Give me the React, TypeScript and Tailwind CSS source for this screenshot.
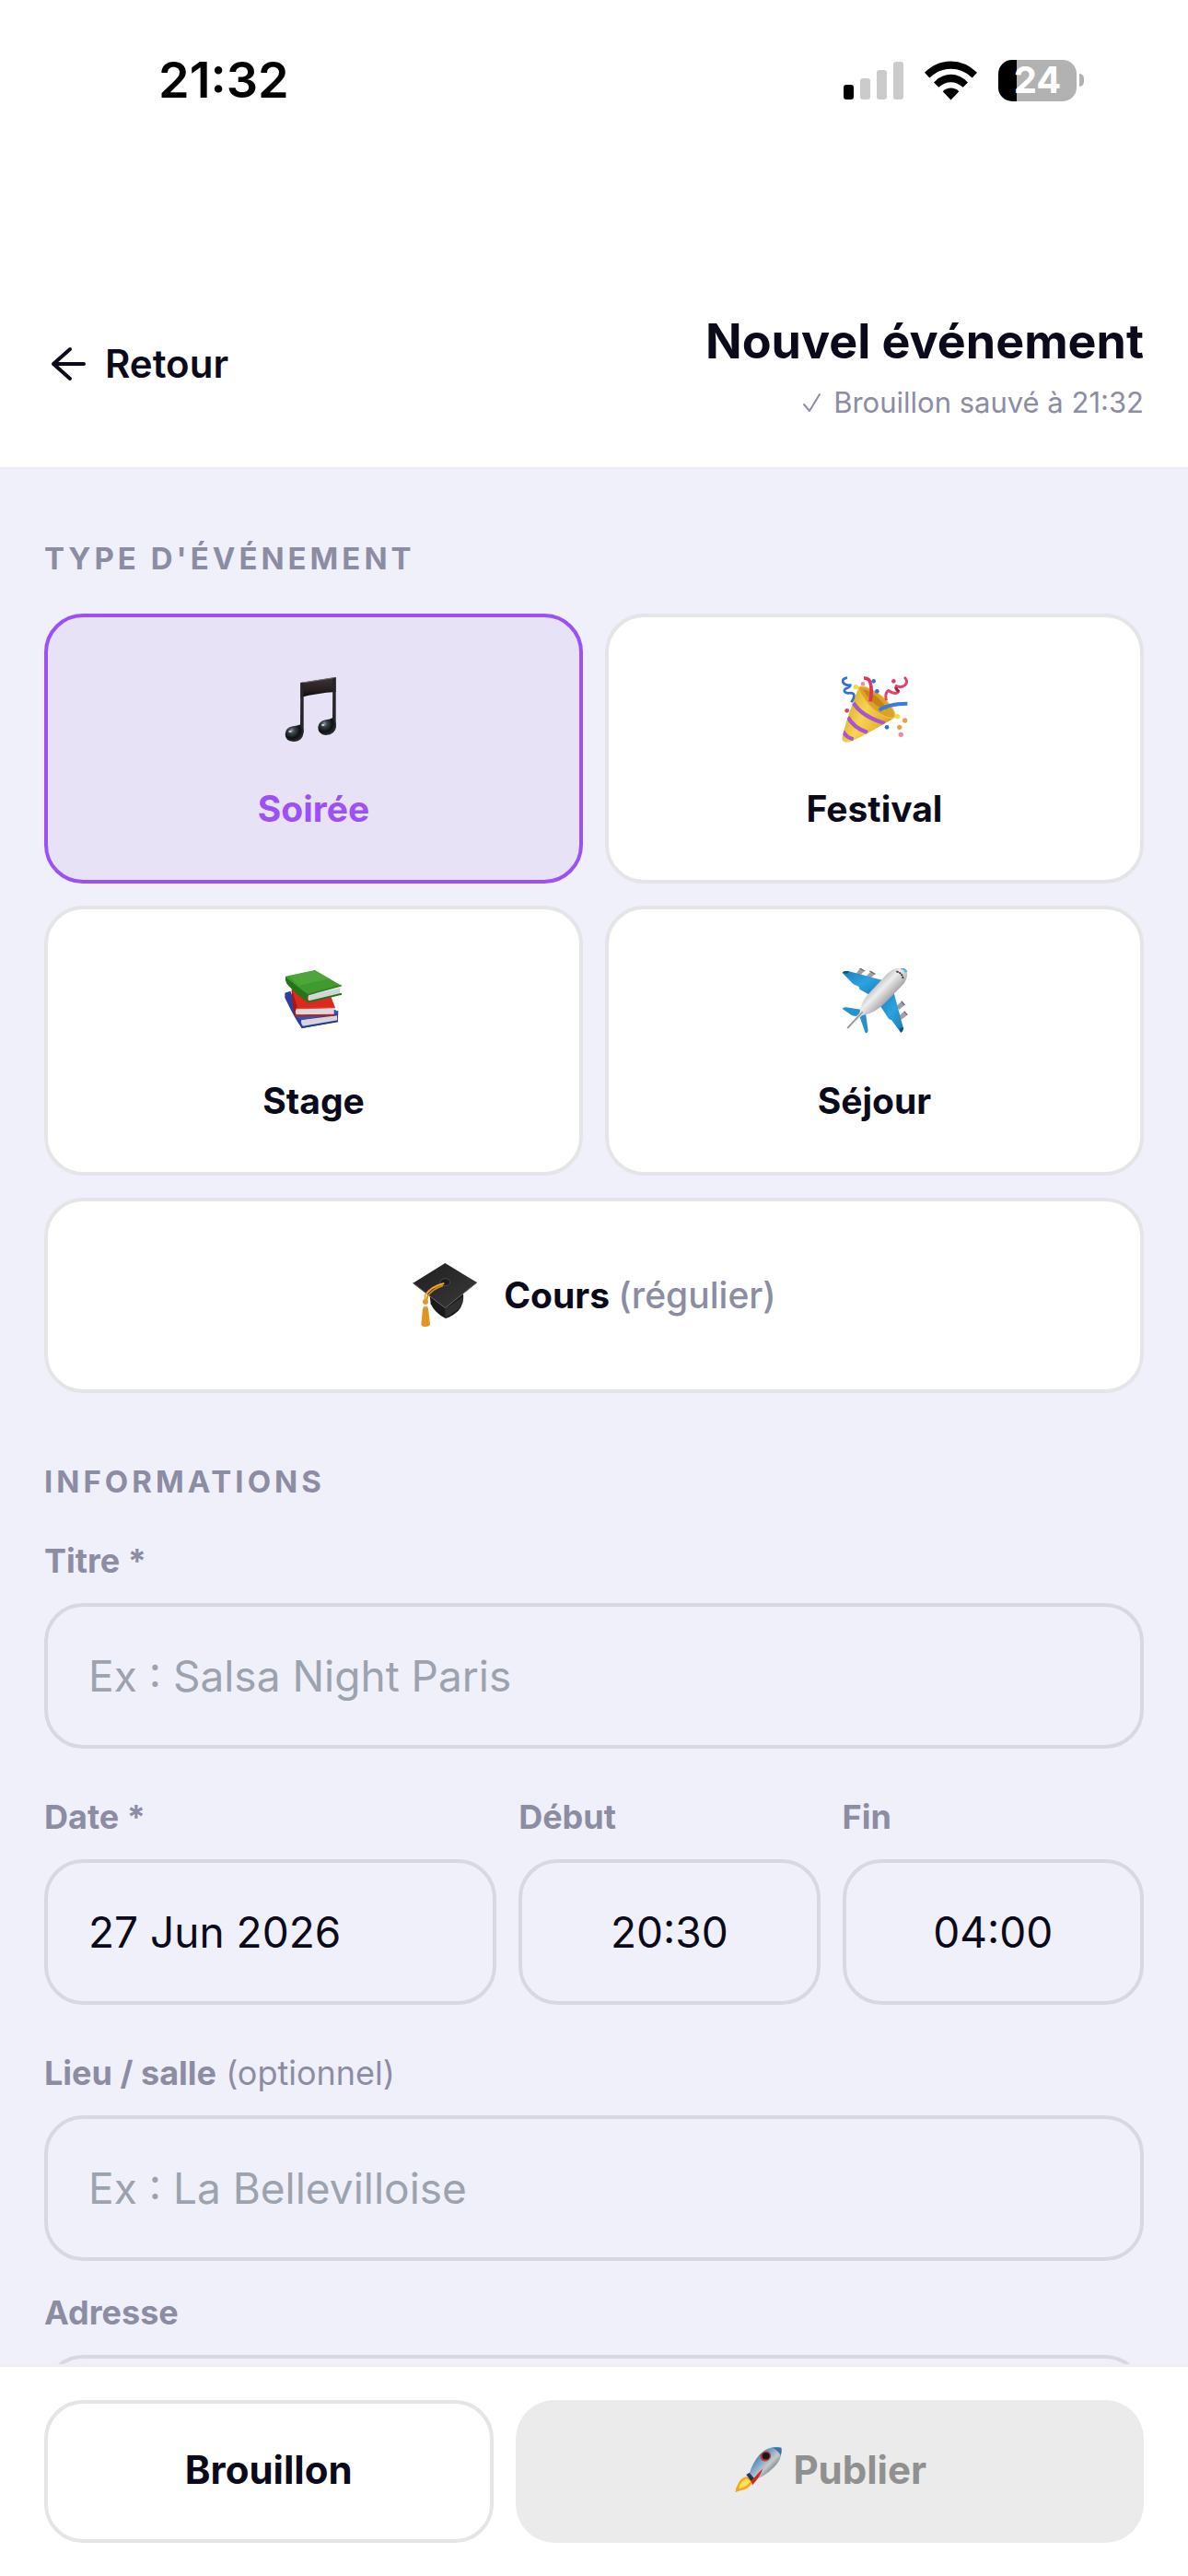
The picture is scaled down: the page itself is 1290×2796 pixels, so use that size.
import { useState } from 'react'
import type { ReactNode } from 'react'
import clsx from 'clsx'

function MusicIcon() {
  return (
    <svg viewBox="73 105 216 216" className="size-[72px]" aria-hidden="true">
      <defs>
        <linearGradient id="beam" x1="0" y1="0" x2="0" y2="1">
          <stop offset="0" stopColor="#3b3437" />
          <stop offset="0.6" stopColor="#2a2020" />
          <stop offset="1" stopColor="#08080a" />
        </linearGradient>
        <radialGradient id="note" cx="0.35" cy="0.35" r="0.75">
          <stop offset="0" stopColor="#8b959b" />
          <stop offset="0.22" stopColor="#3c464c" />
          <stop offset="0.6" stopColor="#0e1113" />
          <stop offset="1" stopColor="#333c42" />
        </radialGradient>
      </defs>
      <path d="M137 126 L252 108 V156 Q190 160 137 174Z" fill="url(#beam)" />
      <path d="M137 127 L252 109" stroke="#77737a" strokeWidth="3" />
      <path d="M137 126 H147 V285 Q147 292 140 296 L136 270Z" fill="#25252a" />
      <path d="M242 112 L252 109 V270 Q252 278 246 284 L241 244Z" fill="#25252a" />
      <path d="M137 262 Q147 270 147 284 Q146 317 114 318 Q87 316 87 293 Q88 272 112 268 Q128 266 137 262Z" fill="url(#note)" />
      <path d="M242 240 Q252 248 253 266 Q251 296 219 297 Q194 295 194 271 Q196 251 219 247 Q234 245 242 240Z" fill="url(#note)" />
      <ellipse cx="103" cy="285" rx="5" ry="3" fill="#d7dde0" />
      <ellipse cx="210" cy="264" rx="5" ry="3" fill="#d7dde0" />
    </svg>
  )
}

function PartyIcon() {
  return (
    <svg viewBox="100 105 216 216" className="size-[72px]" aria-hidden="true">
      <defs>
        <linearGradient id="cone" x1="0" y1="0.3" x2="1" y2="0.8">
          <stop offset="0" stopColor="#d9a520" />
          <stop offset="0.4" stopColor="#f6d452" />
          <stop offset="0.75" stopColor="#e6b32c" />
          <stop offset="1" stopColor="#b97c14" />
        </linearGradient>
        <clipPath id="coneClip">
          <path d="M157 138 Q196 150 272 240 Q190 290 128 319 Q104 324 101 308 Q112 250 157 138Z" />
        </clipPath>
      </defs>
      <path d="M157 138 Q196 150 272 240 Q190 290 128 319 Q104 324 101 308 Q112 250 157 138Z" fill="url(#cone)" />
      <g clipPath="url(#coneClip)" fill="none" stroke="#a855cf" strokeWidth="13">
        <path d="M138 192 Q166 236 240 258" />
        <path d="M120 238 Q140 274 184 288" />
        <path d="M104 284 Q114 304 138 310" />
      </g>
      <path d="M157 140 C175 133 220 155 250 190 C274 218 280 238 266 241 C245 244 205 222 180 187 C162 163 150 148 157 140Z" fill="#dca226" stroke="#f0c044" strokeWidth="4" />
      <path d="M170 148 C190 150 230 180 250 214 C228 214 190 190 170 148Z" fill="#b0730f" opacity="0.6" />
      <path d="M172 111 Q192 110 195 134 Q199 160 193 187" fill="none" stroke="#e0315f" strokeWidth="11" />
      <path d="M222 216 Q252 194 314 194" fill="none" stroke="#3b7be0" strokeWidth="12" />
      <path d="M118 110 Q99 112 105 126 Q111 136 128 134 Q130 140 112 146 Q102 156 120 160 Q138 158 140 166 Q141 176 131 190" fill="none" stroke="#2f6fd6" strokeWidth="8" />
      <path d="M304 108 Q318 122 306 134 Q294 144 278 137 Q272 145 284 156 Q276 166 252 152 Q240 158 245 184" fill="none" stroke="#e2446f" strokeWidth="9" />
      <path d="M276 141 Q280 150 287 155" stroke="#a81840" strokeWidth="8" fill="none" />
      <g fill="#2e72d8">
        <circle cx="204" cy="121" r="7" />
        <circle cx="215" cy="154" r="7" />
        <circle cx="247" cy="271" r="7" />
      </g>
      <g fill="#e23d68">
        <circle cx="269" cy="121" r="7" />
        <circle cx="117" cy="217" r="7" />
      </g>
      <g fill="#f287ad">
        <circle cx="169" cy="130" r="7" />
        <circle cx="293" cy="295" r="8" />
      </g>
      <g fill="#f2dc3c">
        <circle cx="146" cy="140" r="8" />
        <circle cx="282" cy="236" r="8" />
      </g>
      <g fill="#eda04c">
        <circle cx="306" cy="249" r="8" />
        <circle cx="288" cy="271" r="8" />
      </g>
    </svg>
  )
}

function BooksIcon() {
  return (
    <svg viewBox="73 98 216 216" className="size-[72px]" aria-hidden="true">
      <path d="M86 178 L104 172 L140 262 L260 236 L258 272 L141 293 Q118 262 86 194Z" fill="#2c3f9e" />
      <path d="M140 266 L256 252 V270 L146 288 Q136 276 140 266Z" fill="#d6d6da" />
      <path d="M120 256 L250 232 L260 246 L140 266Z" fill="#3950b4" />
      <path d="M141 290 L259 270" stroke="#263a94" strokeWidth="6" />
      <path d="M108 166 L236 190 L250 226 L122 232 Q110 222 108 166Z" fill="#dc281f" />
      <path d="M108 166 Q110 220 118 250 L126 252 L126 222Z" fill="#a81812" />
      <path d="M124 229 L246 228 V248 L124 250 Q117 240 124 229Z" fill="#dadadd" />
      <path d="M118 252 L248 250" stroke="#c41f18" strokeWidth="6" />
      <path d="M122 229 L250 226" stroke="#ec3c30" strokeWidth="4" />
      <path d="M88 124 L184 104 L270 154 L160 184Z" fill="#3f9b2d" />
      <path d="M100 123 L184 105 L230 132 L130 154Z" fill="#57ad43" opacity="0.6" />
      <path d="M88 124 L162 184 Q156 198 162 210 Q120 180 92 148 Q86 138 88 124Z" fill="#247519" />
      <path d="M164 185 L266 160 V180 L166 206 Q158 198 164 185Z" fill="#d8dadd" />
      <path d="M166 192 L266 167 M166 199 L266 174" stroke="#c3c6ca" strokeWidth="2" />
      <path d="M160 184 L270 154" stroke="#2c8520" strokeWidth="5" />
      <path d="M158 208 L271 181" stroke="#247519" strokeWidth="6" />
    </svg>
  )
}

function PlaneIcon() {
  return (
    <svg viewBox="100 98 216 216" className="size-[72px]" aria-hidden="true">
      <defs>
        <linearGradient id="body" x1="0.3" y1="0.3" x2="0.7" y2="0.7">
          <stop offset="0" stopColor="#a09e9f" />
          <stop offset="0.4" stopColor="#efeeee" />
          <stop offset="0.6" stopColor="#c8c6c7" />
          <stop offset="1" stopColor="#767274" />
        </linearGradient>
        <linearGradient id="wing" x1="0" y1="0" x2="1" y2="1">
          <stop offset="0" stopColor="#1f7fba" />
          <stop offset="0.5" stopColor="#2ba3e0" />
          <stop offset="1" stopColor="#1b78b2" />
        </linearGradient>
      </defs>
      <g stroke="#a39fa0" strokeWidth="15">
        <path d="M152 120 L167 102" />
        <path d="M185 129 L202 112" />
        <path d="M282 227 L301 211" />
        <path d="M290 259 L309 244" />
      </g>
      <g stroke="#6f696b" strokeWidth="4">
        <path d="M157 97 L175 107" />
        <path d="M191 107 L209 117" />
        <path d="M294 205 L305 218" />
        <path d="M303 238 L314 250" />
      </g>
      <path d="M102 113 Q106 105 124 108 L236 138 L190 184 L158 166 L156 158 L138 150Z" fill="url(#wing)" />
      <path d="M270 178 L300 290 Q301 304 292 307 L262 266 L254 264 L224 218Z" fill="url(#wing)" />
      <path d="M102 112 Q106 105 124 108 L118 116Z" fill="#174f73" />
      <path d="M288 294 L301 290 Q301 304 292 307Z" fill="#174f73" />
      <path d="M102 230 Q106 223 114 225 L162 232 L158 256 L134 252Z" fill="#2591cd" />
      <path d="M158 254 L178 244 L186 302 Q184 310 177 309Z" fill="#2591cd" />
      <path d="M118 292 Q138 262 158 244 Q162 206 190 178 L250 114 Q278 90 306 98 Q322 114 304 146 L252 200 Q210 246 166 252 Q146 270 122 296Z" fill="url(#body)" />
      <path d="M292 98 Q307 94 314 108 L308 112 Q302 102 292 101Z" fill="#52b6e6" />
      <path d="M278 108 Q299 114 300 134" fill="none" stroke="#3b3537" strokeWidth="5" strokeDasharray="7 2" />
      <path d="M118 293 L168 240" stroke="#8d8789" strokeWidth="4" />
    </svg>
  )
}

function CapIcon() {
  return (
    <svg viewBox="48 60 216 216" className="size-[72px]" aria-hidden="true">
      <defs>
        <linearGradient id="board" x1="0" y1="0" x2="1" y2="1">
          <stop offset="0" stopColor="#1e1e1f" />
          <stop offset="1" stopColor="#3a3a3b" />
        </linearGradient>
      </defs>
      <path d="M106 160 L216 160 Q220 196 200 218 Q178 238 158 243 Q124 226 110 196Z" fill="#1a1a1b" />
      <path d="M156 212 L216 172 Q216 200 196 216 Q176 232 158 240Z" fill="#303031" />
      <path d="M157 63 L261 126 L157 209 L52 128Z" fill="url(#board)" />
      <path d="M52 128 L157 209 L261 126" fill="none" stroke="#69696a" strokeWidth="3" />
      <ellipse cx="157" cy="125" rx="16" ry="12" fill="#1b1b1c" stroke="#4c4c4d" strokeWidth="3" />
      <path d="M154 129 Q112 138 92 168 L92 190" fill="none" stroke="#f2a52c" strokeWidth="6" />
      <path d="M150 136 Q118 146 100 170 L96 190" fill="none" stroke="#d48918" strokeWidth="5" />
      <circle cx="93" cy="189" r="9" fill="#e79a22" />
      <path d="M86 203 H100 V212 H86Z" fill="#b9b4ac" />
      <path d="M84 209 Q94 204 102 209 L108 262 Q106 270 94 270 Q80 270 79 263Z" fill="#e59a26" />
      <path d="M90 212 L86 266 M96 212 L99 266" stroke="#c98018" strokeWidth="2" />
    </svg>
  )
}

function RocketIcon() {
  return (
    <svg viewBox="42 76 162 162" className="size-[54px]" aria-hidden="true">
      <defs>
        <linearGradient id="hull" x1="0.2" y1="0.2" x2="0.8" y2="0.8">
          <stop offset="0" stopColor="#3a76ac" />
          <stop offset="0.35" stopColor="#7fa9cb" />
          <stop offset="0.6" stopColor="#c6cac8" />
          <stop offset="1" stopColor="#4c6475" />
        </linearGradient>
        <linearGradient id="fin" x1="1" y1="0" x2="0" y2="1">
          <stop offset="0" stopColor="#c9160e" />
          <stop offset="0.6" stopColor="#f04a1c" />
          <stop offset="1" stopColor="#fbbf52" />
        </linearGradient>
      </defs>
      <path d="M112 128 L80 137 Q66 142 47 175 L96 170Z" fill="url(#fin)" />
      <path d="M108 190 L150 168 Q142 206 109 233 L112 200Z" fill="url(#fin)" />
      <path d="M90 178 L110 192 Q98 220 72 223 Q60 226 53 230 Q52 216 60 206 Q66 184 90 178Z" fill="#f5a51e" />
      <path d="M88 184 L102 194 Q88 214 64 218 Q66 196 88 184Z" fill="#fde254" />
      <path d="M98 168 Q108 134 132 106 Q162 76 202 84 Q208 118 178 148 Q148 178 112 190Z" fill="url(#hull)" />
      <path d="M172 84 Q190 81 202 84 Q205 96 200 110 Q192 92 172 84Z" fill="#3973ab" />
      <path d="M88 172 L98 166 L114 184 L104 194Z" fill="#26384a" />
      <path d="M104 194 Q124 170 142 152 Q134 178 108 206Z" fill="#d4261a" />
      <ellipse cx="151" cy="112" rx="18" ry="16" fill="#c23430" transform="rotate(-40 151 112)" />
      <ellipse cx="152" cy="111" rx="12" ry="11" fill="#1a1717" />
    </svg>
  )
}

function SignalIcon() {
  return (
    <svg viewBox="0 0 65 41" className="h-[41px] w-[65px]" aria-hidden="true">
      <rect x="0" y="25" width="11" height="16" rx="3" fill="#000" />
      <rect x="18" y="18" width="11" height="23" rx="3" fill="#cbcbcb" />
      <rect x="36" y="9" width="11" height="32" rx="3" fill="#cbcbcb" />
      <rect x="54" y="0" width="11" height="41" rx="3" fill="#cbcbcb" />
    </svg>
  )
}

function WifiIcon() {
  return (
    <svg viewBox="312 44 171 128" className="h-[43px] w-[57px]" aria-hidden="true">
      <path d="M312 82 Q350 45 397.500 45 Q445 45 483 82 L467 99 Q437 70 397.500 70 Q358 70 328 99Z" />
      <path d="M342 114 Q367 88 397.500 88 Q428 88 453 114 L437 130 Q419 113 397.500 113 Q376 113 358 130Z" />
      <path d="M371 143 Q382 132 397.500 132 Q413 132 424 143 L397.500 171Z" />
    </svg>
  )
}

function StatusBar() {
  return (
    <div className="flex h-[174px] items-center justify-between pr-[113px] pl-[172px] text-black">
      <time className="text-[54px] leading-none font-semibold">21:32</time>
      <div className="flex items-center gap-[23px]">
        <SignalIcon />
        <WifiIcon />
        <div className="flex items-center gap-[3px]">
          <div className="flex h-[45px] w-[85px] items-center justify-center rounded-[15px] bg-linear-to-r from-black from-24% to-[#b2b2b2] to-24% text-[40px] leading-none font-bold text-white">
            24
          </div>
          <div className="h-[14px] w-[5px] rounded-r-full bg-[#b2b2b2]" />
        </div>
      </div>
    </div>
  )
}

const eventTypes = [
  { id: 'soiree', label: 'Soirée', icon: <MusicIcon /> },
  { id: 'festival', label: 'Festival', icon: <PartyIcon /> },
  { id: 'stage', label: 'Stage', icon: <BooksIcon /> },
  { id: 'sejour', label: 'Séjour', icon: <PlaneIcon /> },
]

function SectionTitle({ children }: { children: ReactNode }) {
  return (
    <h2 className="text-[33px] leading-10 font-bold tracking-[4px] text-[#8c8ca3] uppercase">
      {children}
    </h2>
  )
}

type FieldProps = {
  id: string
  label: string
  hint?: string
  placeholder?: string
  defaultValue?: string
  centered?: boolean
}

function Field({ id, label, hint, placeholder, defaultValue, centered }: FieldProps) {
  return (
    <div className="flex min-w-0 flex-col gap-[22px]">
      <label htmlFor={id} className="text-[36px] leading-[48px] font-bold text-[#8c8ca3]">
        {label}
        {hint && <span className="font-normal"> {hint}</span>}
      </label>
      <input
        id={id}
        type="text"
        placeholder={placeholder}
        defaultValue={defaultValue}
        className={clsx(
          'h-[158px] w-full rounded-[42px] border-4 border-[#d8d8e2] bg-transparent text-[46px] text-[#0a0a1a] outline-none placeholder:text-[#9ca3af]',
          centered ? 'px-4 text-center' : 'px-11'
        )}
      />
    </div>
  )
}

export default function App() {
  const [type, setType] = useState('soiree')

  const cardStyle = (id: string) =>
    type === id
      ? 'border-[#9b51f5] bg-[#e8e2f6] text-[#9b51f5]'
      : 'border-[#e5e5e8] bg-white text-[#0a0a1a]'

  return (
    <div className="flex h-dvh flex-col bg-[#f0f0fa] font-['Inter',sans-serif] text-[#0a0a1a]">
      <header className="border-b-3 border-[#efeff1] bg-white">
        <StatusBar />
        <div className="flex items-center justify-between px-12 pt-[164px] pb-[52px]">
          <a href="#retour" className="flex items-center gap-4 pb-1 text-[42px] leading-[50px] font-semibold">
            <svg viewBox="0 0 50 50" className="size-[50px]" aria-hidden="true">
              <path d="M43 25 H10 M28 9 L10 25 L28 41" fill="none" stroke="currentColor" strokeWidth="4" strokeLinecap="round" strokeLinejoin="round" />
            </svg>
            Retour
          </a>
          <div className="flex flex-col items-end gap-[15px]">
            <h1 className="text-[52px] leading-[66px] font-bold">Nouvel événement</h1>
            <p className="flex items-center gap-3 text-[31px] leading-9 text-[#8c8ca3]">
              <svg viewBox="0 0 22 22" className="size-[22px]" aria-hidden="true">
                <path d="M2 13 L8 20 L19 2" fill="none" stroke="currentColor" strokeWidth="2" strokeLinecap="round" strokeLinejoin="round" />
              </svg>
              Brouillon sauvé à 21:32
            </p>
          </div>
        </div>
      </header>

      <main className="min-h-0 flex-1 overflow-y-auto px-12 pt-[76px] pb-12 [scrollbar-width:none]">
        <section className="flex flex-col gap-10">
          <SectionTitle>Type d'événement</SectionTitle>
          <div className="grid grid-cols-2 gap-6">
            {eventTypes.map((item) => (
              <button
                key={item.id}
                type="button"
                aria-pressed={type === item.id}
                onClick={() => setType(item.id)}
                className={clsx(
                  'flex flex-col items-center gap-12 rounded-[42px] border-4 pt-16 pb-[53px]',
                  cardStyle(item.id)
                )}
              >
                {item.icon}
                <span className="text-[39px] leading-[48px] font-bold">{item.label}</span>
              </button>
            ))}
            <button
              type="button"
              aria-pressed={type === 'cours'}
              onClick={() => setType('cours')}
              className={clsx(
                'col-span-2 flex h-[212px] items-center justify-center gap-7 rounded-[42px] border-4',
                cardStyle('cours')
              )}
            >
              <CapIcon />
              <span className="text-[39px] leading-[48px] font-bold">
                Cours <span className="font-medium text-[#8c8ca3]">(régulier)</span>
              </span>
            </button>
          </div>
        </section>

        <section className="mt-[76px] flex flex-col">
          <SectionTitle>Informations</SectionTitle>
          <div className="mt-[42px] flex flex-col gap-[50px]">
            <Field id="titre" label="Titre *" placeholder="Ex : Salsa Night Paris" />
            <div className="grid grid-cols-[3fr_2fr_2fr] gap-6">
              <Field id="date" label="Date *" defaultValue="27 Jun 2026" />
              <Field id="debut" label="Début" defaultValue="20:30" centered />
              <Field id="fin" label="Fin" defaultValue="04:00" centered />
            </div>
            <div className="flex flex-col gap-8">
              <Field id="lieu" label="Lieu / salle" hint="(optionnel)" placeholder="Ex : La Bellevilloise" />
              <Field id="adresse" label="Adresse" />
            </div>
          </div>
        </section>
      </main>

      <footer className="grid grid-cols-[5fr_7fr] gap-6 border-t-3 border-[#efeff1] bg-white px-12 py-9">
        <button type="button" className="h-[155px] rounded-[42px] border-4 border-[#e5e5e5] pb-1 text-[42px] font-bold">
          Brouillon
        </button>
        <button
          type="button"
          disabled
          className="flex h-[155px] items-center justify-center gap-3 rounded-[42px] bg-[#ebebeb] pb-1 text-[42px] font-bold text-[#909090]"
        >
          <RocketIcon />
          Publier
        </button>
      </footer>
    </div>
  )
}
